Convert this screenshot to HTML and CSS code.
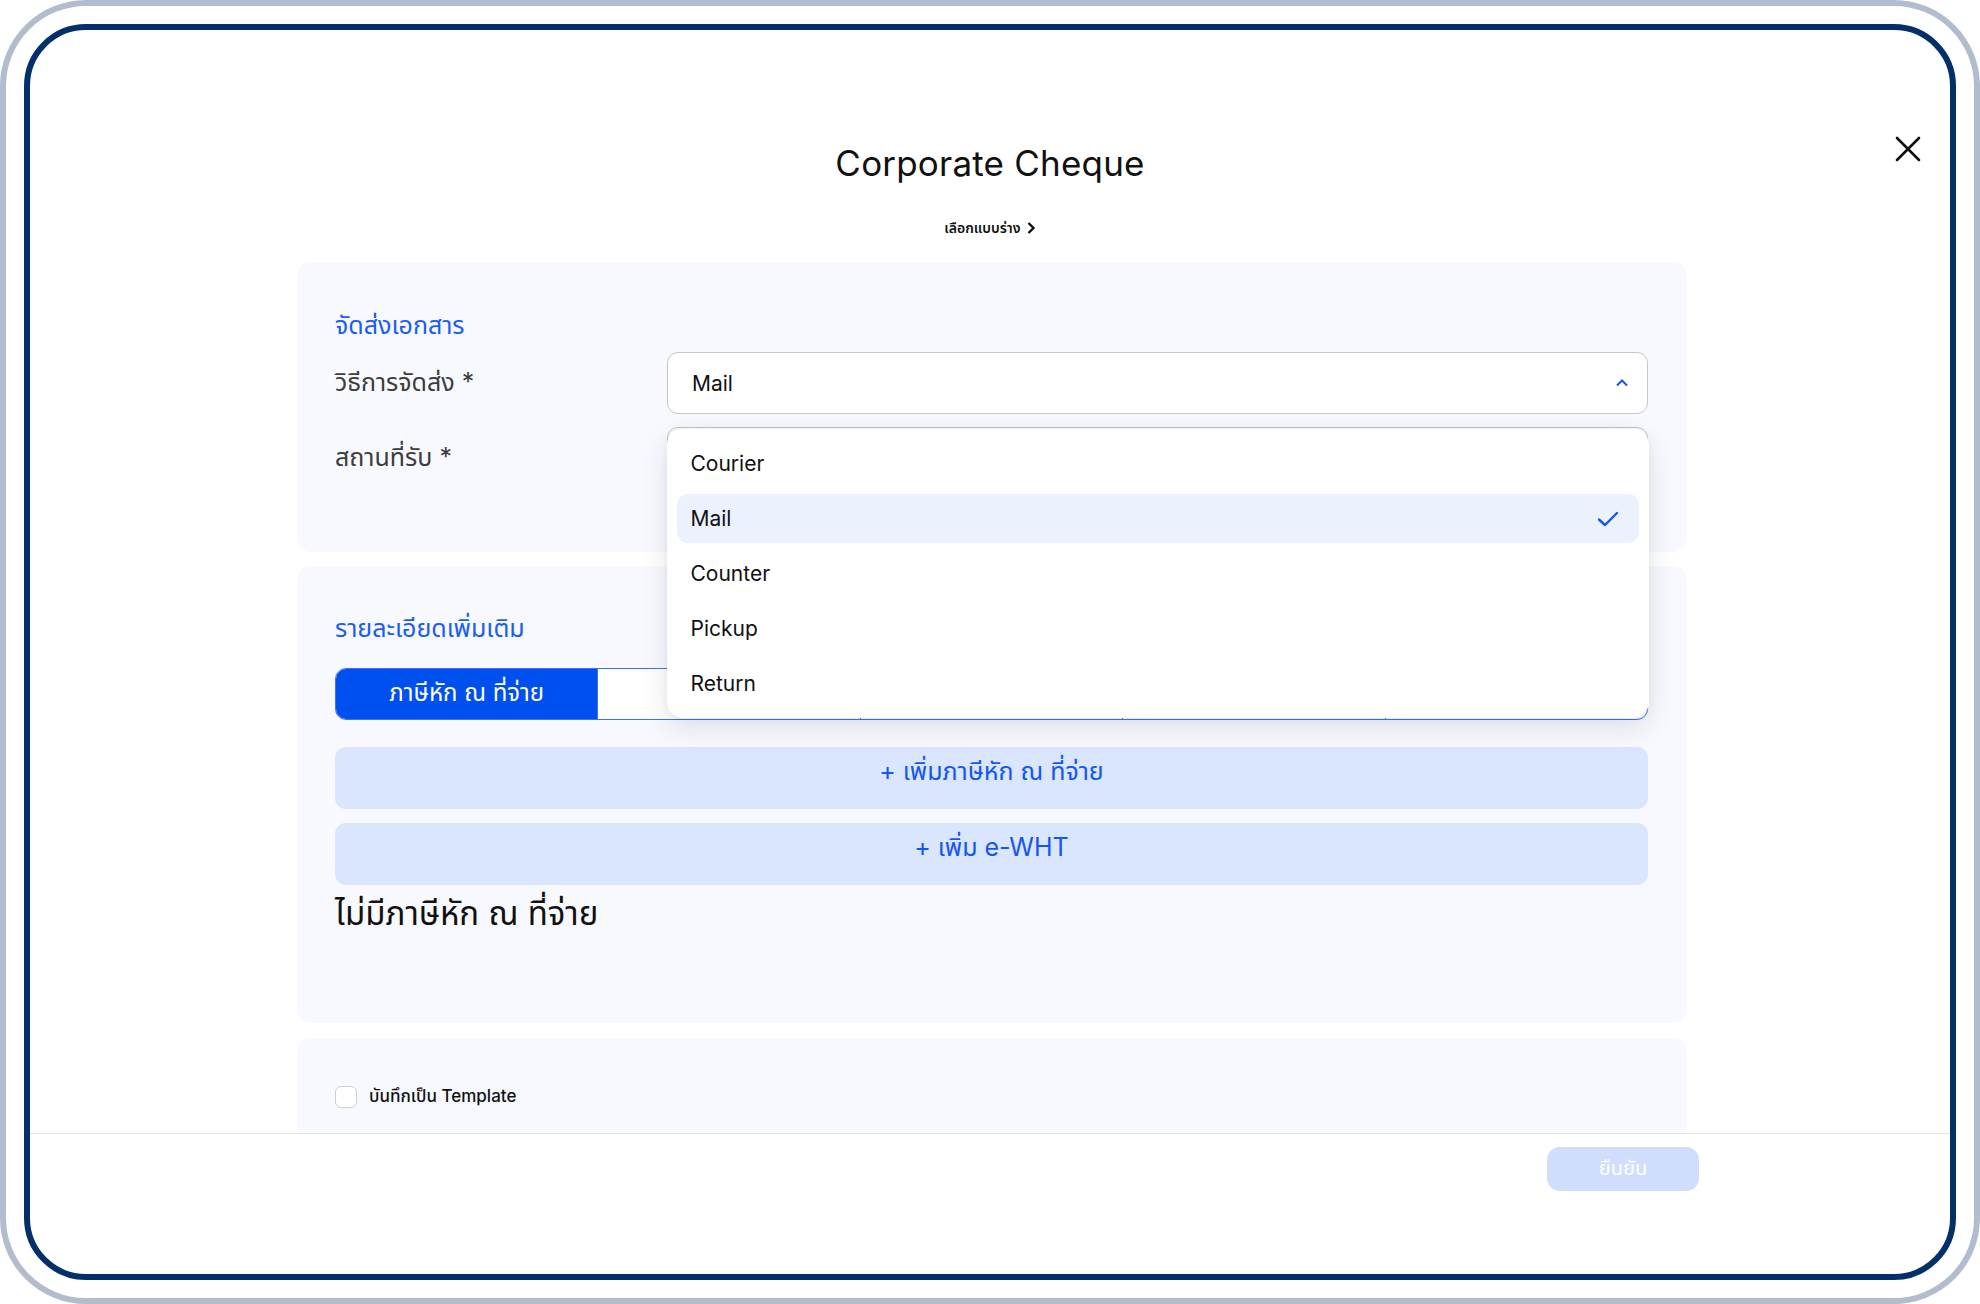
FILE: index.html
```html
<!DOCTYPE html>
<html lang="th">

<head>
    <meta charset="UTF-8">
    <title>Corporate Cheque</title>
    <link rel="stylesheet" href="styles.css">
</head>

<body>

    <div class="device">
        <div class="screen">
            <div class="content">
                <button class="close" aria-label="close">
                    <svg width="26" height="26" viewBox="0 0 26 26">
                        <path d="M2 2 L24 24 M24 2 L2 24" stroke="#111" stroke-width="2.6" stroke-linecap="round" />
                    </svg>
                </button>

                <h1 class="title">Corporate Cheque</h1>
                <div class="draft">เลือกแบบร่าง
                    <svg width="10" height="14" viewBox="0 0 10 14">
                        <path d="M2.5 2 L7.5 7 L2.5 12" fill="none" stroke="#111" stroke-width="2.4" />
                    </svg>
                </div>

                <section class="card card-delivery">
                    <h3 class="card-title">จัดส่งเอกสาร</h3>
                    <div class="row">
                        <label>วิธีการจัดส่ง *</label>
                        <div class="select open">
                            <span>Mail</span>
                            <svg width="14" height="10" viewBox="0 0 14 10">
                                <path d="M2 7.5 L7 2.5 L12 7.5" fill="none" stroke="#1257f2" stroke-width="2" />
                            </svg>

                            <ul class="menu">
                                <li>Courier</li>
                                <li class="selected">Mail
                                    <svg width="22" height="18" viewBox="0 0 22 18">
                                        <path d="M2 9.5 L8 15 L20 3" fill="none" stroke="#1257f2" stroke-width="2.4" stroke-linecap="round" stroke-linejoin="round" />
                                    </svg>
                                </li>
                                <li>Counter</li>
                                <li>Pickup</li>
                                <li>Return</li>
                            </ul>
                        </div>
                    </div>
                    <div class="row">
                        <label>สถานที่รับ *</label>
                        <div class="select"></div>
                    </div>
                </section>

                <section class="card card-more">
                    <h3 class="card-title">รายละเอียดเพิ่มเติม</h3>
                    <div class="tabs">
                        <div class="tab active">ภาษีหัก ณ ที่จ่าย</div>
                        <div class="tab"></div>
                        <div class="tab"></div>
                        <div class="tab"></div>
                        <div class="tab"></div>
                    </div>
                    <button class="add">+ เพิ่มภาษีหัก ณ ที่จ่าย</button>
                    <button class="add">+ เพิ่ม e-WHT</button>
                    <p class="empty">ไม่มีภาษีหัก ณ ที่จ่าย</p>
                </section>

                <section class="card card-template">
                    <label class="check"><span class="box"></span>บันทึกเป็น Template</label>
                </section>
            </div>

            <div class="footer">
                <button class="confirm">ยืนยัน</button>
            </div>
        </div>
    </div>

</body>

</html>
```

FILE: styles.css
```css
* {
    box-sizing: border-box;
}

body {
    margin: 0;
    background: #fff;
    font-family: Inter, "Noto Sans Thai", "Noto Sans", sans-serif;
    color: #111;
}

.device {
    width: 1980px;
    height: 1304px;
    border: 6px solid #b1bccc;
    border-radius: 86px;
    padding: 18px;
}

.screen {
    height: 100%;
    border: 6px solid #04306a;
    border-radius: 62px;
    overflow: hidden;
    display: flex;
    flex-direction: column;
    background: #fff;
}

.content {
    position: relative;
    height: 1103px;
    overflow: hidden;
    padding-top: 111px;
}

.close {
    position: absolute;
    top: 106px;
    right: 29px;
    background: none;
    border: none;
    padding: 0;
}

.title {
    margin: 0;
    text-align: center;
    font-size: 35px;
    line-height: 44px;
    font-weight: 400;
    letter-spacing: 0.2px;
}

.draft {
    margin-top: 33px;
    display: flex;
    justify-content: center;
    align-items: center;
    gap: 5px;
    font-size: 14px;
    line-height: 20px;
    font-weight: 600;
}

.card {
    width: 1390px;
    margin-left: 267px;
    background: #f8f9fe;
    border-radius: 14px;
    padding: 0 39px 0 38px;
}

.card-delivery {
    margin-top: 24px;
    padding-top: 47px;
    padding-bottom: 63px;
}

.card-title {
    margin: 0;
    font-size: 25px;
    line-height: 32px;
    font-weight: 400;
    color: #1a5cf4;
}

.row {
    display: flex;
    align-items: center;
    margin-top: 11px;
}

.row + .row {
    margin-top: 13px;
}

.row label {
    width: 332px;
    font-size: 25px;
    color: #3c3c3c;
}

.select {
    position: relative;
    flex: 1;
    height: 62px;
    background: #fff;
    border: 1.5px solid #c6c6c8;
    border-radius: 11px;
    display: flex;
    align-items: center;
    justify-content: space-between;
    padding: 0 18px 0 24px;
    font-size: 21px;
}

.menu {
    position: absolute;
    z-index: 5;
    top: 76px;
    left: -1.5px;
    right: -1.5px;
    margin: 0;
    padding: 10px 10px;
    list-style: none;
    background: #fff;
    border-radius: 16px;
    box-shadow: 0 10px 28px rgba(30, 40, 70, 0.12), 0 0 8px rgba(30, 40, 70, 0.05);
    display: flex;
    flex-direction: column;
    gap: 6px;
}

.menu li {
    height: 49px;
    border-radius: 11px;
    padding: 0 20px 0 14px;
    display: flex;
    align-items: center;
    justify-content: space-between;
    font-size: 21px;
}

.menu li.selected {
    background: #ebf2fe;
}

.card-more {
    margin-top: 14px;
    padding-top: 46px;
    padding-bottom: 90px;
}

.tabs {
    margin-top: 24px;
    height: 52px;
    display: flex;
    background: #fff;
    border: 1.5px solid #3f72f2;
    border-radius: 11px;
    overflow: hidden;
}

.tab {
    flex: 1;
    border-right: 1px solid #3f72f2;
    display: flex;
    align-items: center;
    justify-content: center;
    font-size: 24px;
}

.tab:last-child {
    border-right: none;
}

.tab.active {
    background: #0050ef;
    color: #fff;
}

.add {
    display: block;
    width: 100%;
    height: 62px;
    margin-top: 14px;
    border: none;
    border-radius: 11px;
    background: #d9e6fd;
    color: #1556f0;
    font-family: inherit;
    font-size: 25px;
    padding: 0 0 12px;
}

.tabs + .add {
    margin-top: 27px;
}

.empty {
    margin: 8px 0 0;
    font-size: 33px;
    line-height: 40px;
}

.card-template {
    margin-top: 15px;
    height: 120px;
    padding-top: 46px;
}

.check {
    display: flex;
    align-items: center;
    gap: 12px;
    font-size: 17px;
    font-weight: 500;
}

.box {
    width: 22px;
    height: 22px;
    background: #fff;
    border: 1.5px solid #cfcfd3;
    border-radius: 6px;
}

.footer {
    flex: 1;
    border-top: 1px solid #e6e6e8;
    padding: 13px 251px 0 0;
    display: flex;
    justify-content: flex-end;
    align-items: flex-start;
}

.confirm {
    width: 152px;
    height: 44px;
    border: none;
    border-radius: 13px;
    background: #d0ddfd;
    color: #fff;
    font-family: inherit;
    font-size: 20px;
}
```
